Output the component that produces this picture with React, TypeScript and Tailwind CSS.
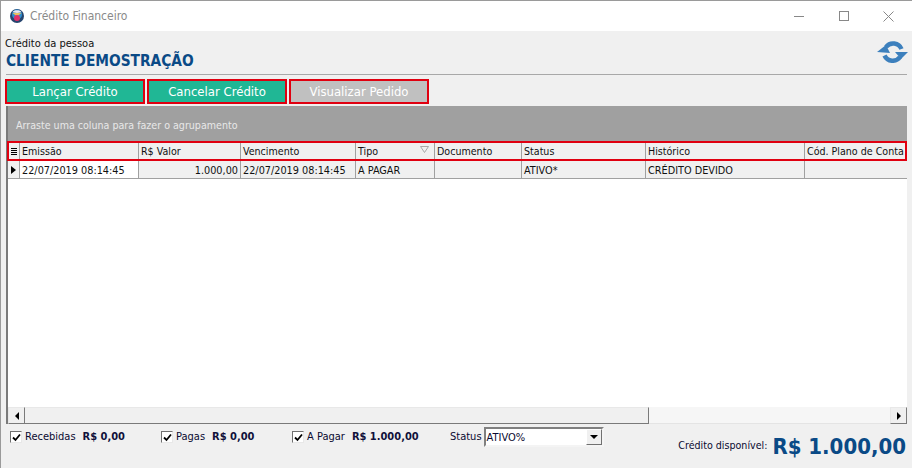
import React from 'react'

const font = "font-['DejaVu_Sans_Condensed','Open_Sans',sans-serif]"

const columns = [
  { label: 'Emissão', width: 'w-[119px]', value: '22/07/2019 08:14:45', white: true },
  { label: 'R$ Valor', width: 'w-[102px]', value: '1.000,00', right: true },
  { label: 'Vencimento', width: 'w-[115px]', value: '22/07/2019 08:14:45' },
  { label: 'Tipo', width: 'w-[79px]', value: 'A PAGAR', sort: true },
  { label: 'Documento', width: 'w-[87px]', value: '' },
  { label: 'Status', width: 'w-[124px]', value: 'ATIVO*' },
  { label: 'Histórico', width: 'w-[159px]', value: 'CRÉDITO DEVIDO' },
  { label: 'Cód. Plano de Conta', width: 'w-[110px]', value: '' },
]

function Logo() {
  return (
    <svg width="16" height="16" viewBox="0 0 16 16">
      <circle cx="8" cy="8" r="7" fill="#26446e" />
      <circle cx="8" cy="6.5" r="5" fill="#2f8fd0" />
      <path d="M3.5 5 L8 4.5 L12.5 5 L8 8.5 Z" fill="#e8c060" />
      <circle cx="8" cy="10" r="3" fill="#e0306a" />
      <path d="M3.5 4 C5 1.5 11 1.5 12.5 4 L8 5 Z" fill="#e9e3ef" />
    </svg>
  )
}

function Refresh() {
  return (
    <svg width="32" height="22" viewBox="0 0 32 22" fill="none">
      <path d="M9 6 A9 9 0 0 1 24.5 8" stroke="#3d80bd" strokeWidth="4.5" />
      <path d="M23 16 A9 9 0 0 1 7.5 14.5" stroke="#3d80bd" strokeWidth="4.5" />
      <path d="M0 11 L9 4 L13 12 Z" fill="#3d80bd" />
      <path d="M31 11 L24 18 L18 11 Z" fill="#3d80bd" />
    </svg>
  )
}

function ActionButton({ label, disabled }: { label: string; disabled?: boolean }) {
  return (
    <div
      className={`w-[140px] h-[25px] border-2 border-[#e00010] flex items-center justify-center text-[13px] text-white ${
        disabled ? 'bg-[#c0c0c0]' : 'bg-[#20b795]'
      }`}
    >
      {label}
    </div>
  )
}

function Check({ label, value, width }: { label: string; value: string; width: string }) {
  return (
    <div className={`flex items-center h-[20px] ${width}`}>
      <div className="w-[12px] h-[12px] bg-white border border-t-[#707070] border-l-[#707070] border-r-[#e8e8e8] border-b-[#e8e8e8] flex items-center justify-center">
        <svg width="9" height="9" viewBox="0 0 9 9" fill="none">
          <path d="M1 4.5 L3.5 7 L8 1.5" stroke="#000" strokeWidth="1.8" />
        </svg>
      </div>
      <span className="ml-[3px] text-[11px] text-[#0a0a30]">{label}</span>
      <span className="ml-[7px] text-[11px] font-bold text-[#10103a]">{value}</span>
    </div>
  )
}

export default function App() {
  return (
    <div className={`${font} w-[912px] h-[468px] overflow-hidden bg-[#f0f0f0] border-l border-t border-[#9a9a9a] flex flex-col text-[#111]`}>
      {/* title bar */}
      <div className="h-[30px] shrink-0 bg-white flex items-center pl-[8px]">
        <Logo />
        <span className="ml-[5px] text-[12px] text-[#8a8a8a]">Crédito Financeiro</span>
        <div className="ml-auto flex items-center pr-[1px]">
          <div className="w-[45px] flex justify-center">
            <div className="w-[10px] h-px bg-[#888]" />
          </div>
          <div className="w-[45px] flex justify-center">
            <div className="w-[10px] h-[10px] border border-[#888]" />
          </div>
          <div className="w-[45px] flex justify-center">
            <svg width="11" height="11" viewBox="0 0 11 11" stroke="#888" fill="none">
              <path d="M0.5 0.5 L10.5 10.5 M10.5 0.5 L0.5 10.5" />
            </svg>
          </div>
        </div>
      </div>

      {/* cliente */}
      <div className="h-[43px] shrink-0 pl-[5px] pr-[3px] flex justify-between">
        <div className="pt-[6px]">
          <div className="text-[11px] leading-[14px] text-[#111] ml-[-1px]">Crédito da pessoa</div>
          <div className="text-[15.3px] leading-[21px] font-bold text-[#0a4a86]">CLIENTE DEMOSTRAÇÃO</div>
        </div>
        <div className="pt-[10px]">
          <Refresh />
        </div>
      </div>
      <div className="h-[1px] mx-[5px] bg-[#a8a8a8] shrink-0" />

      {/* acoes */}
      <div className="flex gap-[2px] pl-[4px] pt-[4px] shrink-0">
        <ActionButton label="Lançar Crédito" />
        <ActionButton label="Cancelar Crédito" />
        <ActionButton label="Visualizar Pedido" disabled />
      </div>

      {/* grid */}
      <div className="ml-[5px] mr-[5px] mt-[2px] h-[318px] shrink-0 border-l-2 border-[#7a7a7a] flex flex-col bg-white">
        <div className="h-[35px] shrink-0 bg-[#a0a0a0] flex items-center pl-[8px] pt-[5px] text-[10.6px] text-[#e8e8e8]">
          Arraste uma coluna para fazer o agrupamento
        </div>
        <div className="h-[20px] shrink-0 flex bg-[#f0f0f0] border-2 border-[#e00010] ml-[-1px] text-[10.6px] overflow-hidden">
          <div className="w-[11px] shrink-0 border-r border-[#a0a0a0] flex flex-col justify-center items-center gap-px">
            <div className="w-[6px] h-px bg-black" />
            <div className="w-[6px] h-px bg-black" />
            <div className="w-[6px] h-px bg-black" />
            <div className="w-[6px] h-px bg-black" />
          </div>
          {columns.map((c) => (
            <div key={c.label} className={`${c.width} shrink-0 border-r border-[#a0a0a0] pl-[2px] pt-[2px] flex items-center justify-between whitespace-nowrap`}>
              {c.label}
              {c.sort && (
                <svg width="9" height="7" viewBox="0 0 9 7" fill="none" stroke="#a8a8a8" className="mr-[5px] mb-[5px]">
                  <path d="M0.5 0.5 H8.5 L4.5 6.5 Z" />
                </svg>
              )}
            </div>
          ))}
        </div>
        <div className="h-[18px] shrink-0 flex bg-[#f0f0f0] border-b border-[#a0a0a0] text-[10.8px] overflow-hidden">
          <div className="w-[12px] shrink-0 border-r border-[#a0a0a0] flex items-center justify-center">
            <div className="w-0 h-0 border-y-[4px] border-y-transparent border-l-[5px] border-l-black" />
          </div>
          {columns.map((c) => (
            <div
              key={c.label}
              className={`${c.width} shrink-0 border-r border-[#a0a0a0] px-[2px] pt-[3px] flex items-center whitespace-nowrap ${
                c.white ? 'bg-white' : ''
              } ${c.right ? 'justify-end' : ''}`}
            >
              {c.value}
            </div>
          ))}
        </div>
        <div className="flex-1" />
        {/* scroll horizontal */}
        <div className="h-[17px] shrink-0 flex bg-[#f6f6f6] border-b border-[#e4e4e4]">
          <div className="w-[17px] mb-[-1px] border border-[#e8e8e8] border-r-[#7a7a7a] border-b-[#7a7a7a] bg-[#f0f0f0] flex items-center justify-center">
            <div className="w-0 h-0 border-y-[4px] border-y-transparent border-r-[4px] border-r-black" />
          </div>
          <div className="w-[624px] mb-[-1px] bg-[#f0f0f0] border-t border-r border-b border-t-[#e8e8e8] border-r-[#7a7a7a] border-b-[#7a7a7a]" />
          <div className="flex-1" />
          <div className="w-[17px] mb-[-1px] border border-[#e8e8e8] border-r-[#7a7a7a] border-b-[#7a7a7a] bg-[#f0f0f0] flex items-center justify-center">
            <div className="w-0 h-0 border-y-[4px] border-y-transparent border-l-[4px] border-l-black" />
          </div>
        </div>
      </div>

      {/* rodape */}
      <div className="flex items-start pl-[9px] pt-[3px] flex-1">
        <Check label="Recebidas" value="R$ 0,00" width="w-[151px]" />
        <Check label="Pagas" value="R$ 0,00" width="w-[131px]" />
        <Check label="A Pagar" value="R$ 1.000,00" width="w-[158px]" />
        <span className="text-[11px] leading-[20px] text-[#0a0a30] mr-[2px]">Status</span>
        <div className="w-[120px] h-[20px] bg-white border-2 border-t-[#808080] border-l-[#808080] border-r-[#f4f4f4] border-b-[#f4f4f4] flex text-[11px] text-[#0a0a30]">
          <div className="flex-1 pl-px leading-[17px]">ATIVO%</div>
          <div className="w-[16px] bg-[#f0f0f0] border border-r-[#707070] border-b-[#707070] border-t-white border-l-white flex items-center justify-center">
            <div className="w-0 h-0 border-x-[4px] border-x-transparent border-t-[4px] border-t-black" />
          </div>
        </div>
        <div className="ml-auto mr-[6px] mt-[7px] flex items-center">
          <span className="text-[10.6px] text-[#0a0a30] mt-[-3px]">Crédito disponível:</span>
          <span className="ml-[5px] text-[22px] leading-[26px] font-bold text-[#0a4a86]">R$ 1.000,00</span>
        </div>
      </div>
    </div>
  )
}
